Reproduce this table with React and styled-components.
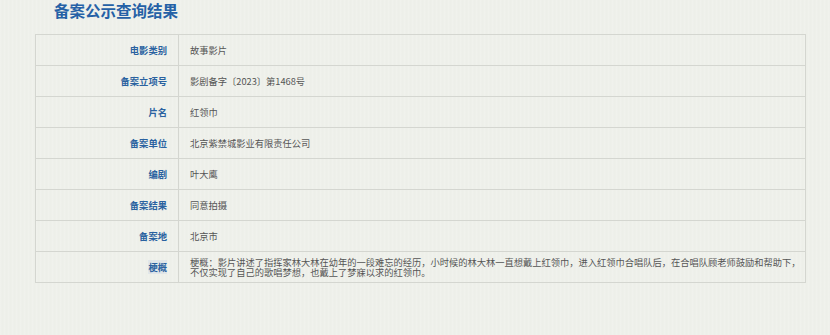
import React from 'react';
import styled, { createGlobalStyle } from 'styled-components';

const GlobalStyle = createGlobalStyle`
  html, body {
    margin: 0;
    padding: 0;
  }
  body {
    background-color: #eef0ea;
    background-image: repeating-linear-gradient(
      90deg,
      rgba(255, 255, 255, 0.12) 0px,
      rgba(255, 255, 255, 0.12) 1px,
      rgba(0, 0, 0, 0.006) 2px,
      rgba(0, 0, 0, 0) 4px
    );
    font-family: "Noto Sans CJK SC", "Noto Sans", sans-serif;
    height: 335px;
    overflow: hidden;
  }
`;

const Page = styled.div`
  padding: 0 24px 0 35px;
  width: 771px;
`;

const Title = styled.h2`
  margin: 0 0 0 19px;
  height: 34px;
  font-size: 15.5px;
  line-height: 20px;
  font-weight: 700;
  color: #2561a6;
`;

const Table = styled.table`
  width: 771px;
  border-collapse: collapse;
  border: 1px solid #d4d6d0;
  table-layout: fixed;
`;

const Row = styled.tr`
  height: 31px;
  border-bottom: 1px solid #d4d6d0;
`;

const Label = styled.td`
  width: 131px;
  padding: 0 11px 0 0;
  text-align: right;
  vertical-align: middle;
  font-size: 9.3px;
  font-weight: 700;
  color: #2a62a0;
  border-right: 1px solid #d4d6d0;

  span {
    background: ${(p) => (p.$marked ? 'rgba(120, 160, 220, 0.12)' : 'transparent')};
  }
`;

const Value = styled.td`
  padding: 0 2px 0 11px;
  vertical-align: middle;
  font-size: 9.25px;
  line-height: 10.5px;
  color: #555;
`;

const rows = [
  ['电影类别', '故事影片'],
  ['备案立项号', '影剧备字〔2023〕第1468号'],
  ['片名', '红领巾'],
  ['备案单位', '北京紫禁城影业有限责任公司'],
  ['编剧', '叶大鹰'],
  ['备案结果', '同意拍摄'],
  ['备案地', '北京市'],
  [
    '梗概',
    '梗概：影片讲述了指挥家林大林在幼年的一段难忘的经历，小时候的林大林一直想戴上红领巾，进入红领巾合唱队后，在合唱队顾老师鼓励和帮助下，不仅实现了自己的歌唱梦想，也戴上了梦寐以求的红领巾。',
  ],
];

export default function App() {
  return (
    <>
      <GlobalStyle />
      <Page>
        <Title>备案公示查询结果</Title>
        <Table>
          <tbody>
            {rows.map(([k, v], i) => (
              <Row key={k}>
                <Label $marked={i === rows.length - 1}>
                  <span>{k}</span>
                </Label>
                <Value>{v}</Value>
              </Row>
            ))}
          </tbody>
        </Table>
      </Page>
    </>
  );
}
